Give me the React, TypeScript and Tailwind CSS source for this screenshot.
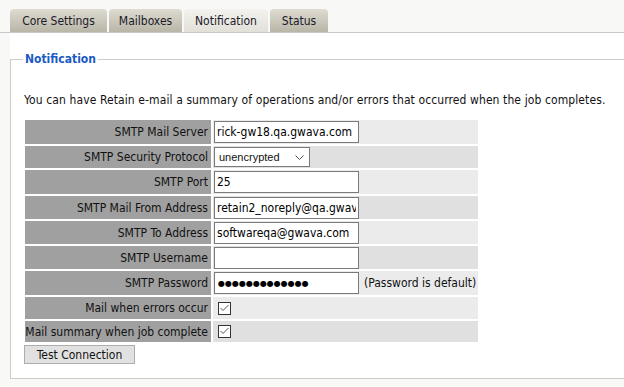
import React from "react";

type Row = {
  label: string;
  kind: "input" | "select" | "password" | "checkbox";
  value?: string;
  bg: string;
  h: string;
  note?: string;
};

const rows: Row[] = [
  { label: "SMTP Mail Server", kind: "input", value: "rick-gw18.qa.gwava.com", bg: "bg-[#ebebeb]", h: "h-[24px]" },
  { label: "SMTP Security Protocol", kind: "select", value: "unencrypted", bg: "bg-[#e0e0e0]", h: "h-[22px]" },
  { label: "SMTP Port", kind: "input", value: "25", bg: "bg-[#ebebeb]", h: "h-[24px]" },
  { label: "SMTP Mail From Address", kind: "input", value: "retain2_noreply@qa.gwava.com", bg: "bg-[#e0e0e0]", h: "h-[23px]" },
  { label: "SMTP To Address", kind: "input", value: "softwareqa@gwava.com", bg: "bg-[#ebebeb]", h: "h-[23px]" },
  { label: "SMTP Username", kind: "input", value: "", bg: "bg-[#e0e0e0]", h: "h-[23px]" },
  { label: "SMTP Password", kind: "password", value: "●●●●●●●●●●●●●", bg: "bg-[#ebebeb]", h: "h-[24px]", note: "(Password is default)" },
  { label: "Mail when errors occur", kind: "checkbox", bg: "bg-[#ebebeb]", h: "h-[22px]" },
  { label: "Mail summary when job complete", kind: "checkbox", bg: "bg-[#e0e0e0]", h: "h-[21px]" },
];

function Check() {
  return (
    <div className="ml-[5px] flex h-[13px] w-[13px] items-center justify-center border border-[#333333] bg-white">
      <svg width="11" height="11" viewBox="0 0 11 11">
        <path d="M1.5 5 L4 7.5 L9.5 2" fill="none" stroke="#555555" strokeWidth="1" />
      </svg>
    </div>
  );
}

function Value({ row }: { row: Row }) {
  if (row.kind === "checkbox") return <Check />;
  if (row.kind === "select")
    return (
      <div className="ml-[1px] flex h-[20px] w-[96px] items-center justify-between border border-[#7a7a7a] bg-white pl-[4px] pr-[5px]">
        <span className="font-[Liberation_Sans,Arial,sans-serif] text-[11px] text-[#111]">{row.value}</span>
        <svg width="9" height="5" viewBox="0 0 9 5">
          <path d="M0.5 0.5 L4.5 4.5 L8.5 0.5" fill="none" stroke="#555555" strokeWidth="1" />
        </svg>
      </div>
    );
  const pw = row.kind === "password";
  return (
    <div className="flex items-center">
      <input
        readOnly
        value={row.value}
        className={`ml-[1px] h-[22px] w-[145px] border border-[#7a7a7a] bg-white text-black outline-none ${
          pw ? "pl-[3px] font-[DejaVu_Sans,sans-serif] text-[8px]" : "px-[2px] text-[12px]"
        }`}
      />
      {row.note && <span className="ml-[5px] text-[12px] text-[#111]">{row.note}</span>}
    </div>
  );
}

export default function App() {
  return (
    <div className="h-[387px] w-[624px] overflow-hidden bg-[#f8f8f6] font-[DejaVu_Sans_Condensed,DejaVu_Sans,sans-serif] text-[12px] text-[#111]">
      <div className="flex items-end gap-[2px] border-b border-[#c8c8c8] pl-[10px] pt-[9px]">
        <div className="flex h-[23px] w-[97px] items-center justify-center rounded-t-[4px] bg-gradient-to-b from-[#dedbd1] to-[#b9b5a7] text-[#1a1a2a]">Core Settings</div>
        <div className="flex h-[23px] w-[73px] items-center justify-center rounded-t-[4px] bg-gradient-to-b from-[#dedbd1] to-[#b9b5a7] text-[#1a1a2a]">Mailboxes</div>
        <div className="flex h-[23px] w-[84px] items-center justify-center rounded-t-[4px] bg-gradient-to-b from-[#f3f2ee] to-[#e2e0d8] text-[#1a1a2a]">Notification</div>
        <div className="flex h-[23px] w-[58px] items-center justify-center rounded-t-[4px] bg-gradient-to-b from-[#dedbd1] to-[#b9b5a7] text-[#1a1a2a]">Status</div>
      </div>
      <div className="ml-[10px] bg-white pt-[19px]">
        <fieldset className="border-b border-l border-t border-[#cccccc] pb-[14px] pl-[12px]">
          <legend className="px-[2px] text-[12px] font-bold leading-[14px] text-[#1a5bc4]">Notification</legend>
          <p className="ml-[1px] mt-[27px] leading-[14px] tracking-[0.1px]">
            You can have Retain e-mail a summary of operations and/or errors that occurred when the job completes.
          </p>
          <div className="ml-[2px] mt-[13px] flex flex-col gap-[2px]">
            {rows.map((r) => (
              <div key={r.label} className={`flex gap-[2px] ${r.h}`}>
                <div className="flex w-[186px] items-center justify-end bg-[#a0a0a0] pr-[3px] text-[#111]">{r.label}</div>
                <div className={`flex w-[265px] items-center ${r.bg}`}>
                  <Value row={r} />
                </div>
              </div>
            ))}
          </div>
          <button className="ml-[1px] mt-[3px] flex h-[19px] w-[111px] items-center justify-center border border-[#adadad] bg-[#e1e1e1] text-[12px] text-[#111]">
            Test Connection
          </button>
        </fieldset>
      </div>
    </div>
  );
}
